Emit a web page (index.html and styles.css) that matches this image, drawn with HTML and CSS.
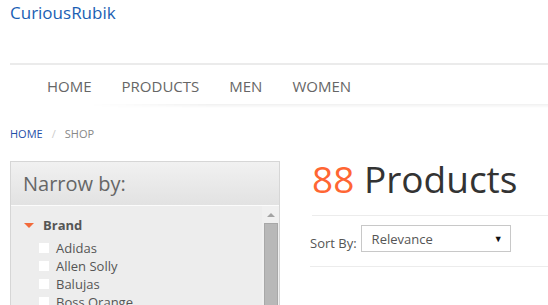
FILE: index.html
```html
<!DOCTYPE html>
<html>
<head>
<meta charset="utf-8">
<link rel="stylesheet" href="styles.css">
</head>
<body>
<div class="page">
  <header class="header">
    <a class="logo" href="#">CuriousRubik</a>
  </header>
  <nav class="nav">
    <ul class="nav-list">
      <li><a href="#">HOME</a></li>
      <li><a href="#">PRODUCTS</a></li>
      <li><a href="#">MEN</a></li>
      <li><a href="#">WOMEN</a></li>
    </ul>
  </nav>
  <div class="crumbs">
    <a href="#" class="crumb-link">HOME</a>
    <span class="crumb-sep">/</span>
    <span class="crumb-cur">SHOP</span>
  </div>
  <div class="main">
    <aside class="panel">
      <div class="panel-head">Narrow by:</div>
      <div class="panel-body">
        <div class="filters">
          <div class="facet-title"><span class="tri"></span>Brand</div>
          <ul class="facet-list">
            <li><span class="box"></span>Adidas</li>
            <li><span class="box"></span>Allen Solly</li>
            <li><span class="box"></span>Balujas</li>
            <li><span class="box"></span>Boss Orange</li>
          </ul>
        </div>
        <div class="scroll">
          <div class="scroll-up"></div>
          <div class="scroll-thumb"></div>
        </div>
      </div>
    </aside>
    <section class="results">
      <h1 class="count"><span class="num">88</span> Products</h1>
      <div class="sort">
        <span class="sort-label">Sort By:</span>
        <div class="select">
          <span>Relevance</span>
          <span class="arrow">&#9660;</span>
        </div>
      </div>
    </section>
  </div>
</div>
</body>
</html>
```

FILE: styles.css
```css
* { box-sizing: border-box; }
html, body { margin: 0; padding: 0; background: #fff; overflow: hidden; height: 305px; }
body { font-family: "Open Sans", "Liberation Sans", sans-serif; color: #555; }
a { text-decoration: none; }
ul { list-style: none; margin: 0; padding: 0; }

.page { padding-left: 10px; }

.header { height: 63px; padding-top: 2px; }
.logo { font-size: 17px; line-height: 20px; color: #1a5fb4; display: inline-block; }

.nav { border-top: 2px solid #ebebeb; }
.nav-list { display: flex; padding: 11px 0 8px 22px; }
.nav-list a { display: block; padding: 0 15px; font-size: 15px; line-height: 20px; color: #666; }
.nav::after {
  content: ""; display: block; height: 4px;
  background: linear-gradient(to right, rgba(255,255,255,0) 80px, rgba(0,0,0,0.06) 200px);
  -webkit-mask: linear-gradient(to bottom, #000, transparent);
}

.crumbs { margin-top: 18px; font-size: 11px; line-height: 15px; display: flex; }
.crumb-link { color: #1f4fa8; }
.crumb-sep { color: #ccc; padding: 0 9px; }
.crumb-cur { color: #888; }

.main { display: flex; gap: 30px; margin-top: 20px; }

.panel { width: 270px; border: 1px solid #d6d6d6; border-bottom: 0; background: #ededed; height: 150px; }
.panel-head {
  font-size: 20px; line-height: 24px; color: #666;
  padding: 10px 12px 9px;
  background: linear-gradient(to bottom, #f1f1f1, #e2e2e2);
  border-bottom: 1px solid #fbfbfb;
  height: 44px;
}
.panel-body { display: flex; height: 105px; overflow: hidden; }
.filters { flex: 1; padding: 10px 0 0 13px; }
.facet-title { font-size: 13px; font-weight: bold; line-height: 18px; color: #555; display: flex; align-items: center; }
.tri { width: 0; height: 0; border-left: 5px solid transparent; border-right: 5px solid transparent; border-top: 5px solid #f26a3a; margin-right: 9px; }
.facet-list { padding-left: 15px; margin-top: 5px; }
.facet-list li { font-size: 13px; line-height: 18px; color: #555; display: flex; align-items: center; }
.box { width: 10px; height: 10px; background: #fff; margin-right: 7px; }

.scroll { width: 17px; background: #f0f0f0; padding: 7px 1px 0 2px; display: flex; flex-direction: column; align-items: center; }
.scroll-up { width: 0; height: 0; border-left: 4px solid transparent; border-right: 4px solid transparent; border-bottom: 4px solid #a3a3a3; margin-bottom: 6px; }
.scroll-thumb { width: 14px; height: 150px; background: #b8b8b8; border: 1px solid #a8a8a8; }

.results { flex: 1; margin-top: -4px; }
.count { margin: 0 0 0 2px; font-weight: normal; font-size: 37px; line-height: 43px; color: #333; border-bottom: 1px solid #ececec; padding-bottom: 15px; }
.count .num { color: #ff6633; }
.sort { display: flex; align-items: flex-end; padding: 9px 0 14px; border-bottom: 1px solid #ececec; }
.sort-label { font-size: 13px; line-height: 18px; color: #555; margin-right: 4px; }
.select { width: 150px; height: 27px; border: 1px solid #c8c8c8; display: flex; align-items: center; justify-content: space-between; padding: 0 7px 0 10px; font-size: 13px; color: #555; }
.arrow { font-size: 9px; color: #111; }
```
